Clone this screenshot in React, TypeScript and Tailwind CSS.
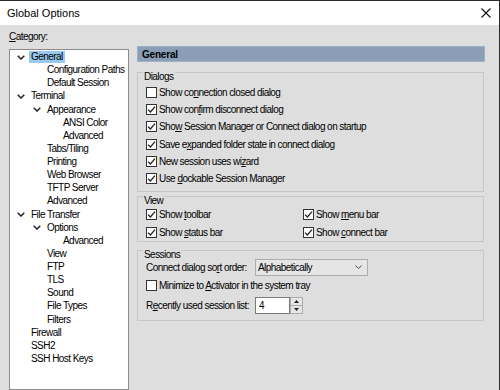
import React from "react";

type TreeNode = { label: string; level: 0 | 1 | 2; open?: boolean; selected?: boolean };

const tree: TreeNode[] = [
  { label: "General", level: 0, open: true, selected: true },
  { label: "Configuration Paths", level: 1 },
  { label: "Default Session", level: 1 },
  { label: "Terminal", level: 0, open: true },
  { label: "Appearance", level: 1, open: true },
  { label: "ANSI Color", level: 2 },
  { label: "Advanced", level: 2 },
  { label: "Tabs/Tiling", level: 1 },
  { label: "Printing", level: 1 },
  { label: "Web Browser", level: 1 },
  { label: "TFTP Server", level: 1 },
  { label: "Advanced", level: 1 },
  { label: "File Transfer", level: 0, open: true },
  { label: "Options", level: 1, open: true },
  { label: "Advanced", level: 2 },
  { label: "View", level: 1 },
  { label: "FTP", level: 1 },
  { label: "TLS", level: 1 },
  { label: "Sound", level: 1 },
  { label: "File Types", level: 1 },
  { label: "Filters", level: 1 },
  { label: "Firewall", level: 0 },
  { label: "SSH2", level: 0 },
  { label: "SSH Host Keys", level: 0 },
];

const indent = ["pl-[7px]", "pl-[23px]", "pl-[39px]"];

function Chevron() {
  return (
    <svg width="8" height="5" viewBox="0 0 8 5">
      <path d="M0.7 0.7 L4 4 L7.3 0.7" fill="none" stroke="#222" strokeWidth="1.5" />
    </svg>
  );
}

function Check({ checked }: { checked?: boolean }) {
  return (
    <span className="flex h-[11px] w-[11px] shrink-0 items-center justify-center border border-[#333] bg-white">
      {checked && (
        <svg width="9" height="9" viewBox="0 0 9 9">
          <path d="M1 4.6 L3.4 7 L8 1.6" fill="none" stroke="#222" strokeWidth="1.3" />
        </svg>
      )}
    </span>
  );
}

function CheckRow({ checked, children }: { checked?: boolean; children: React.ReactNode }) {
  return (
    <div className="flex h-[13px] items-center">
      <Check checked={checked} />
      <span className="ml-[2px] whitespace-nowrap">{children}</span>
    </div>
  );
}

function Group({ title, className, children }: { title: string; className?: string; children: React.ReactNode }) {
  return (
    <div className={`w-[347px] border border-[#c6c6c6] ${className ?? ""}`}>
      <div className="-mt-[2.3px] ml-[5px] w-fit bg-[#dedede] px-[1px] leading-[12px]">{title}</div>
      {children}
    </div>
  );
}

export default function App() {
  return (
    <div className="flex h-[390px] w-[500px] flex-col overflow-hidden border-t border-r border-[#2b2b2b] bg-[#dedede] font-['Liberation_Sans',Arial,sans-serif] text-[10px] tracking-[-0.55px] text-black">
      {/* Titelleiste */}
      <div className="flex h-[24px] shrink-0 items-center justify-between bg-white pl-[7px] pr-[8px]">
        <span className="text-[11px] tracking-normal">Global Options</span>
        <svg width="10" height="10" viewBox="0 0 10 10">
          <path d="M0.5 0.5 L9.5 9.5 M9.5 0.5 L0.5 9.5" stroke="#111" strokeWidth="1.1" />
        </svg>
      </div>

      <div className="flex min-h-0 flex-1">
        {/* Kategorien */}
        <div className="flex shrink-0 flex-col pl-[9px] pt-[6px]">
          <div className="leading-[12px]">
            <u className="underline-offset-[1px]">C</u>ategory:
          </div>
          <div className="mt-[6px] h-[350px] w-[120px] border border-[#8c8c8c] bg-white pt-[0.5px]">
            {tree.map((n, i) => (
              <div key={i} className={`flex h-[13.13px] items-center ${indent[n.level]}`}>
                <span className="flex w-[12px] shrink-0 items-center">{n.open && <Chevron />}</span>
                <span className={`whitespace-nowrap px-[2px] leading-[12px] ${n.selected ? "bg-[#99c9ef]" : ""}`}>
                  {n.label}
                </span>
              </div>
            ))}
          </div>
        </div>

        {/* Einstellungen */}
        <div className="ml-[8px] flex flex-col pt-[21px]">
          <div className="flex h-[16px] w-[348px] items-center border border-[#9fb0c4] bg-[#8a9fb7] pl-[4px] font-bold tracking-[-0.2px]">
            General
          </div>

          <Group title="Dialogs" className="mt-[10px] pb-[6px]">
            <div className="mt-[3px] flex flex-col gap-[4.3px] pl-[8px]">
              <CheckRow>
                Show co<u>n</u>nection closed dialog
              </CheckRow>
              <CheckRow checked>
                Show con<u>f</u>irm disconnect dialog
              </CheckRow>
              <CheckRow checked>
                Sho<u>w</u> Session Manager or Connect dialog on startup
              </CheckRow>
              <CheckRow checked>
                Save e<u>x</u>panded folder state in connect dialog
              </CheckRow>
              <CheckRow checked>
                New session uses wi<u>z</u>ard
              </CheckRow>
              <CheckRow checked>
                Use <u>d</u>ockable Session Manager
              </CheckRow>
            </div>
          </Group>

          <Group title="View" className="mt-[4px] pb-[2px]">
            <div className="mt-[1px] grid grid-cols-[157px_1fr] gap-y-[5px] pl-[8px]">
              <CheckRow checked>
                Show <u>t</u>oolbar
              </CheckRow>
              <CheckRow checked>
                Show <u>m</u>enu bar
              </CheckRow>
              <CheckRow checked>
                Show <u>s</u>tatus bar
              </CheckRow>
              <CheckRow checked>
                Show <u>c</u>onnect bar
              </CheckRow>
            </div>
          </Group>

          <Group title="Sessions" className="mt-[8px] pb-[6px]">
            <div className="flex flex-col pl-[8px]">
              <div className="-mt-[1.7px] flex h-[17px] items-center">
                <span className="w-[109px] whitespace-nowrap">
                  Connect dialog so<u>r</u>t order:
                </span>
                <div className="flex h-[17px] w-[113px] items-center justify-between border border-[#adadad] bg-[#e5e5e5] pl-[2px] pr-[5px]">
                  <span>Alphabetically</span>
                  <svg width="7" height="4" viewBox="0 0 7 4">
                    <path d="M0.5 0.5 L3.5 3.5 L6.5 0.5" fill="none" stroke="#444" strokeWidth="1" />
                  </svg>
                </div>
              </div>
              <div className="mt-[3.5px]">
                <CheckRow>
                  Minimize to <u>A</u>ctivator in the system tray
                </CheckRow>
              </div>
              <div className="mt-[4.5px] flex h-[17px] items-center">
                <span className="w-[109px] whitespace-nowrap">
                  R<u>e</u>cently used session list:
                </span>
                <div className="flex h-[17px] w-[35px] items-center border border-[#7a7a7a] bg-white pl-[3px]">4</div>
                <div className="flex h-[17px] w-[13px] flex-col border border-[#acacac] bg-[#e6e6e6]">
                  <div className="flex flex-1 items-center justify-center border-b border-[#acacac]">
                    <svg width="5" height="3" viewBox="0 0 5 3">
                      <path d="M0 3 L2.5 0 L5 3 Z" fill="#222" />
                    </svg>
                  </div>
                  <div className="flex flex-1 items-center justify-center">
                    <svg width="5" height="3" viewBox="0 0 5 3">
                      <path d="M0 0 L2.5 3 L5 0 Z" fill="#222" />
                    </svg>
                  </div>
                </div>
              </div>
            </div>
          </Group>
        </div>
      </div>
    </div>
  );
}
